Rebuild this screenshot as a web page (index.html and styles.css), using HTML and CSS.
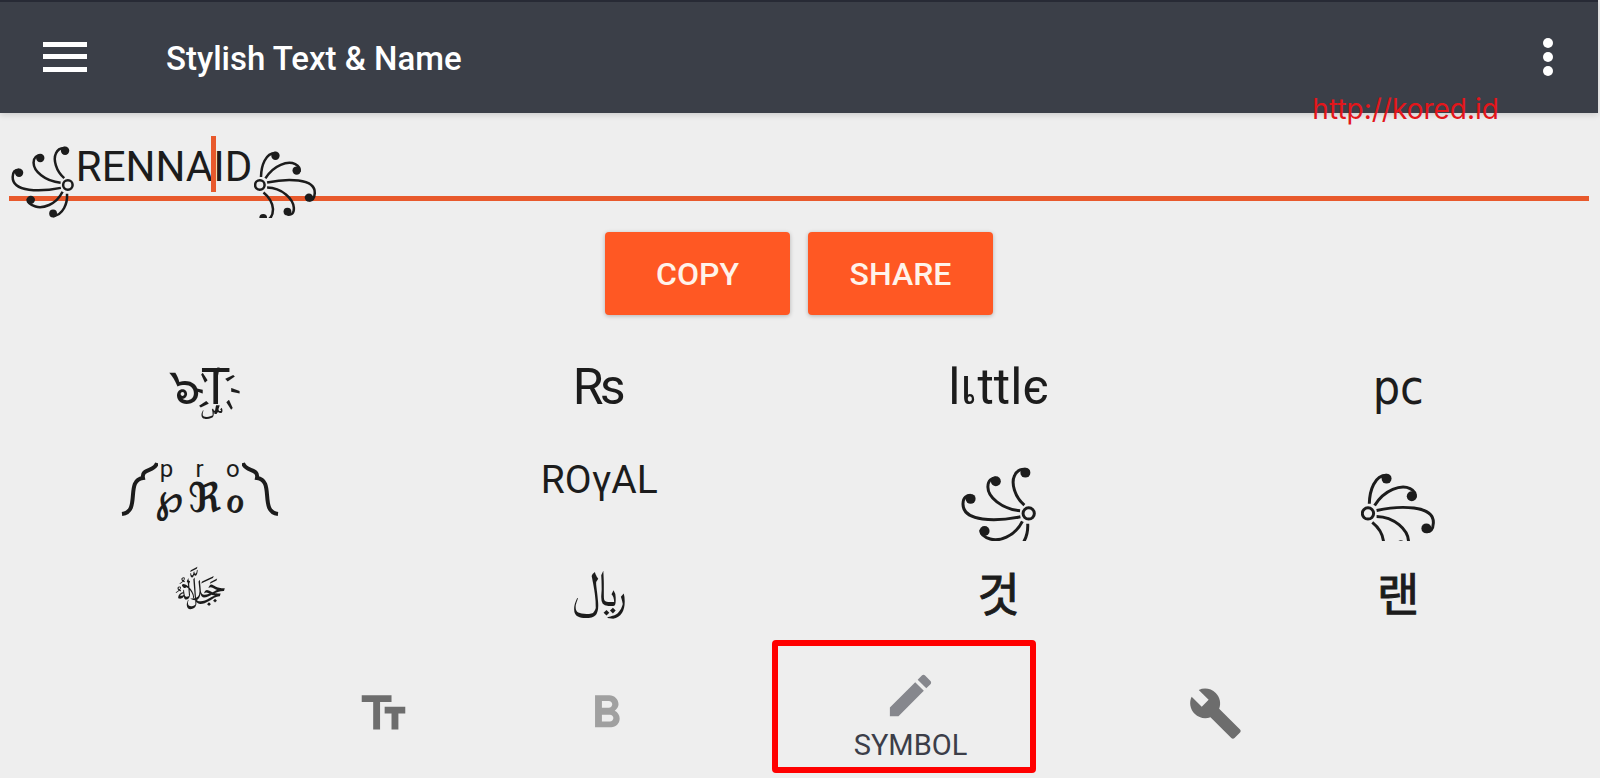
FILE: index.html
```html
<!DOCTYPE html>
<html lang="en">
<head>
<meta charset="utf-8">
<title>Stylish Text &amp; Name</title>
<link rel="stylesheet" href="styles.css">
</head>
<body>
<svg class="defs" aria-hidden="true">
  <g id="fan-left" fill="none" stroke="currentColor" stroke-width="9">
    <circle cx="328" cy="490" r="17"/>
    <path d="M315 465C285 440 275 398 285 377C292 360 305 356 318 357"/>
    <path d="M302 482C245 476 205 440 205 410C205 390 218 383 229 383"/>
    <path d="M303 500C230 515 129 516 130 461C130 441 142 435 153 435"/>
    <path d="M309 514C285 562 237 575 212 567C190 560 182 552 184 540"/>
    <path d="M325 521C327 556 312 596 275 602"/>
    <g fill="currentColor" stroke="none"><circle cx="318" cy="367" r="15"/><circle cx="229" cy="393" r="15"/><circle cx="153" cy="446" r="15"/><circle cx="195" cy="543" r="15"/><circle cx="275" cy="592" r="14"/></g>
  </g>
  <g id="fan-right" fill="none" stroke="currentColor" stroke-width="9">
    <circle cx="145" cy="490" r="17"/>
    <path d="M149 461C150 420 165 375 201 375"/>
    <path d="M165 466C195 418 245 402 272 415C286 422 290 429 287 442"/>
    <path d="M171 481C240 466 345 464 342 519C341 538 335 545 322 545"/>
    <path d="M171 499C225 500 265 540 267 572C268 592 258 598 244 596"/>
    <path d="M158 517C178 533 190 556 192 575C193 602 180 619 157 617"/>
    <g fill="currentColor" stroke="none"><circle cx="201" cy="385" r="15"/><circle cx="277" cy="438" r="15"/><circle cx="321" cy="535" r="15"/><circle cx="244" cy="585" r="14"/><circle cx="157" cy="608" r="14"/></g>
  </g>
</svg>

<header class="bar">
  <button class="icon-btn menu" aria-label="Menu"><svg viewBox="0 0 44 30"><path d="M0 0h44v5H0zM0 12h44v5H0zM0 25h44v5H0z"/></svg></button>
  <h1 class="title">Stylish Text &amp; Name</h1>
  <button class="icon-btn more" aria-label="More options"><svg viewBox="0 0 12 38"><circle cx="6" cy="5" r="5"/><circle cx="6" cy="19" r="5"/><circle cx="6" cy="33" r="5"/></svg></button>
  <a class="watermark" href="#">http://kored.id</a>
</header>

<main class="content">
  <div class="field">
    <svg class="fan" viewBox="124 350 226 258"><use href="#fan-left"/></svg>
    <input class="name" type="text" value="RENNAID" aria-label="Name">
    <svg class="fan" viewBox="124 350 226 258"><use href="#fan-right"/></svg>
    <span class="caret"></span>
  </div>

  <div class="actions">
    <button class="action">COPY</button>
    <button class="action">SHARE</button>
  </div>

  <div class="symbols">
    <button class="cell">๖ۣT҉</button>
    <button class="cell">₨</button>
    <button class="cell">lเttlє</button>
    <button class="cell narrow">pc</button>

    <button class="cell pro">
      <svg class="brace" viewBox="0 0 37 54"><path d="M1 52C20 50 4 18 22 16C20 6 34 10 36 1"/></svg>
      <span class="marks"><span class="above"><span>p</span><span>r</span><span>o</span></span><span class="base"><span>℘</span><span>ℜ</span><span class="script">ℴ</span></span></span>
      <svg class="brace" viewBox="0 0 37 54"><path d="M36 52C17 50 33 18 15 16C17 6 3 10 1 1"/></svg>
    </button>
    <button class="cell royal">ROγAL</button>
    <button class="cell ornament" aria-label="Left ornament"><svg viewBox="124 350 226 223"><use href="#fan-left"/></svg></button>
    <button class="cell ornament" aria-label="Right ornament"><svg viewBox="124 350 226 223"><use href="#fan-right"/></svg></button>

    <button class="cell arabic">ﷻ</button>
    <button class="cell arabic">﷼</button>
    <button class="cell korean" lang="ko">것</button>
    <button class="cell korean" lang="ko">랜</button>
  </div>
</main>

<nav class="tabs">
  <button class="tab" aria-label="Text size"><svg viewBox="0 0 24 24"><path d="M2.500 4v3h5v12h3V7h5V4h-13zm19 5h-9v3h3v7h3v-7h3V9z"/></svg></button>
  <button class="tab pale" aria-label="Bold"><svg viewBox="0 0 24 24"><path d="M15.600 10.790c.970-.670 1.650-1.770 1.650-2.790 0-2.260-1.750-4-4-4H7v14h7.040c2.090 0 3.710-1.700 3.710-3.790 0-1.520-.860-2.820-2.150-3.420zM10 6.500h3c.830 0 1.500.670 1.500 1.500s-.670 1.500-1.500 1.500h-3v-3zm3.500 9H10v-3h3.500c.830 0 1.500.670 1.500 1.500s-.670 1.500-1.500 1.500z"/></svg></button>
  <button class="tab active"><svg viewBox="0 0 24 24"><path d="M3 17.250V21h3.750L17.810 9.940l-3.750-3.750L3 17.250zM20.710 7.040c.390-.390.390-1.020 0-1.410l-2.340-2.340c-.390-.390-1.020-.390-1.410 0l-1.830 1.830 3.750 3.750 1.830-1.830z"/></svg>SYMBOL<span class="highlight"></span></button>
  <button class="tab" aria-label="Tools"><svg viewBox="0 0 24 24"><path d="M22.700 19l-9.100-9.100c.900-2.300.400-5-1.500-6.900-2-2-5-2.400-7.400-1.300L9 6 6 9 1.600 4.700C.400 7.100.900 10.100 2.900 12.100c1.900 1.900 4.600 2.400 6.900 1.500l9.100 9.100c.400.400 1 .400 1.400 0l2.300-2.300c.500-.400.500-1.100.100-1.400z"/></svg></button>
</nav>
</body>
</html>
```
FILE: styles.css
```css
* { box-sizing: border-box; }
body {
  margin: 0;
  min-height: 100vh;
  padding-right: 2px;
  display: flex;
  flex-direction: column;
  background: #eee;
  color: #1c1c1c;
  font-family: Roboto, "Noto Sans", "DejaVu Sans", sans-serif;
}
button { border: 0; padding: 0; background: none; color: inherit; font: inherit; }
svg { display: block; fill: currentColor; }
.defs { position: absolute; width: 0; height: 0; }

.bar {
  position: relative;
  display: flex;
  align-items: center;
  height: 113px;
  padding: 0 44px 2px 43px;
  border-top: 2px solid #272a35;
  background: #3b3f48;
  color: #fff;
  box-shadow: 0 2px 6px rgba(0, 0, 0, .14);
}
.menu svg { width: 44px; height: 30px; }
.title { flex: 1; margin: 0 0 0 79px; padding-top: 4px; font-size: 33px; line-height: 40px; font-weight: 500; }
.more svg { width: 12px; height: 38px; }
.watermark {
  position: absolute;
  right: 99px;
  bottom: -14px;
  color: #e3161b;
  font-family: Inter, sans-serif;
  font-size: 28px;
  line-height: 36px;
  text-decoration: none;
}

.content { flex: 1; }
.field {
  position: relative;
  display: flex;
  align-items: flex-end;
  height: 88px;
  margin: 0 9px;
  padding-left: 2px;
  background: linear-gradient(#e8592c, #e8592c) 0 100% / 100% 5px no-repeat;
}
.fan { width: 63px; height: 72px; margin-bottom: -17px; }
.name {
  width: 180px;
  height: 56px;
  margin-bottom: 6px;
  padding: 0;
  border: 0;
  background: none;
  color: inherit;
  font: 400 42px/56px Roboto, sans-serif;
  text-align: center;
}
.caret { position: absolute; left: 202px; bottom: 9px; width: 5px; height: 56px; background: #e8592c; }

.actions { display: flex; justify-content: center; gap: 18px; padding-top: 31px; }
.action {
  width: 185px;
  height: 83px;
  border-radius: 4px;
  background: #ff5823;
  color: #fff3ea;
  font-size: 32px;
  font-weight: 500;
  box-shadow: 0 1px 4px rgba(0, 0, 0, .25);
}

.symbols {
  display: grid;
  grid-template-columns: repeat(4, 1fr);
  grid-template-rows: 100px 104px 100px;
  padding-top: 22px;
}
.cell { display: flex; align-items: center; justify-content: center; font-size: 50px; line-height: 60px; }
.narrow { font-family: "DejaVu Sans Condensed", "DejaVu Sans", sans-serif; font-size: 48px; }
.royal { padding-bottom: 18px; font-size: 39px; }
.ornament { align-items: flex-end; }
.ornament svg { width: 75px; height: 74px; }
.pro { gap: 2px; }
.brace { width: 37px; height: 54px; }
.brace path { fill: none; stroke: currentColor; stroke-width: 4; }
.marks { display: flex; flex-direction: column; width: 80px; }
.above, .base { display: flex; justify-content: space-between; }
.above { font-size: 24px; line-height: 18px; }
.base { margin: 0 -5px; font-family: "DejaVu Sans", sans-serif; font-size: 41px; line-height: 40px; font-weight: 700; }
.script { font-weight: 400; -webkit-text-stroke: 1px currentColor; }
.korean { font-family: "Noto Sans CJK KR", sans-serif; font-size: 46px; -webkit-text-stroke: 1px currentColor; }
.arabic { padding-bottom: 4px; }

.tabs { display: flex; justify-content: center; height: 126px; color: #6d6d6d; }
.tab {
  position: relative;
  display: flex;
  flex-direction: column;
  align-items: center;
  justify-content: center;
  width: 223px;
  padding-bottom: 4px;
}
.tab svg { width: 55px; height: 55px; }
.pale { color: #a0a0a0; }
.active { width: 386px; gap: 4px; padding-bottom: 0; color: #3c3e49; font-size: 29px; line-height: 36px; }
.active svg { color: #86878d; }
.highlight { position: absolute; top: -12px; bottom: 5px; left: 54px; width: 264px; border: 6px solid #f00; border-radius: 4px; }
```
